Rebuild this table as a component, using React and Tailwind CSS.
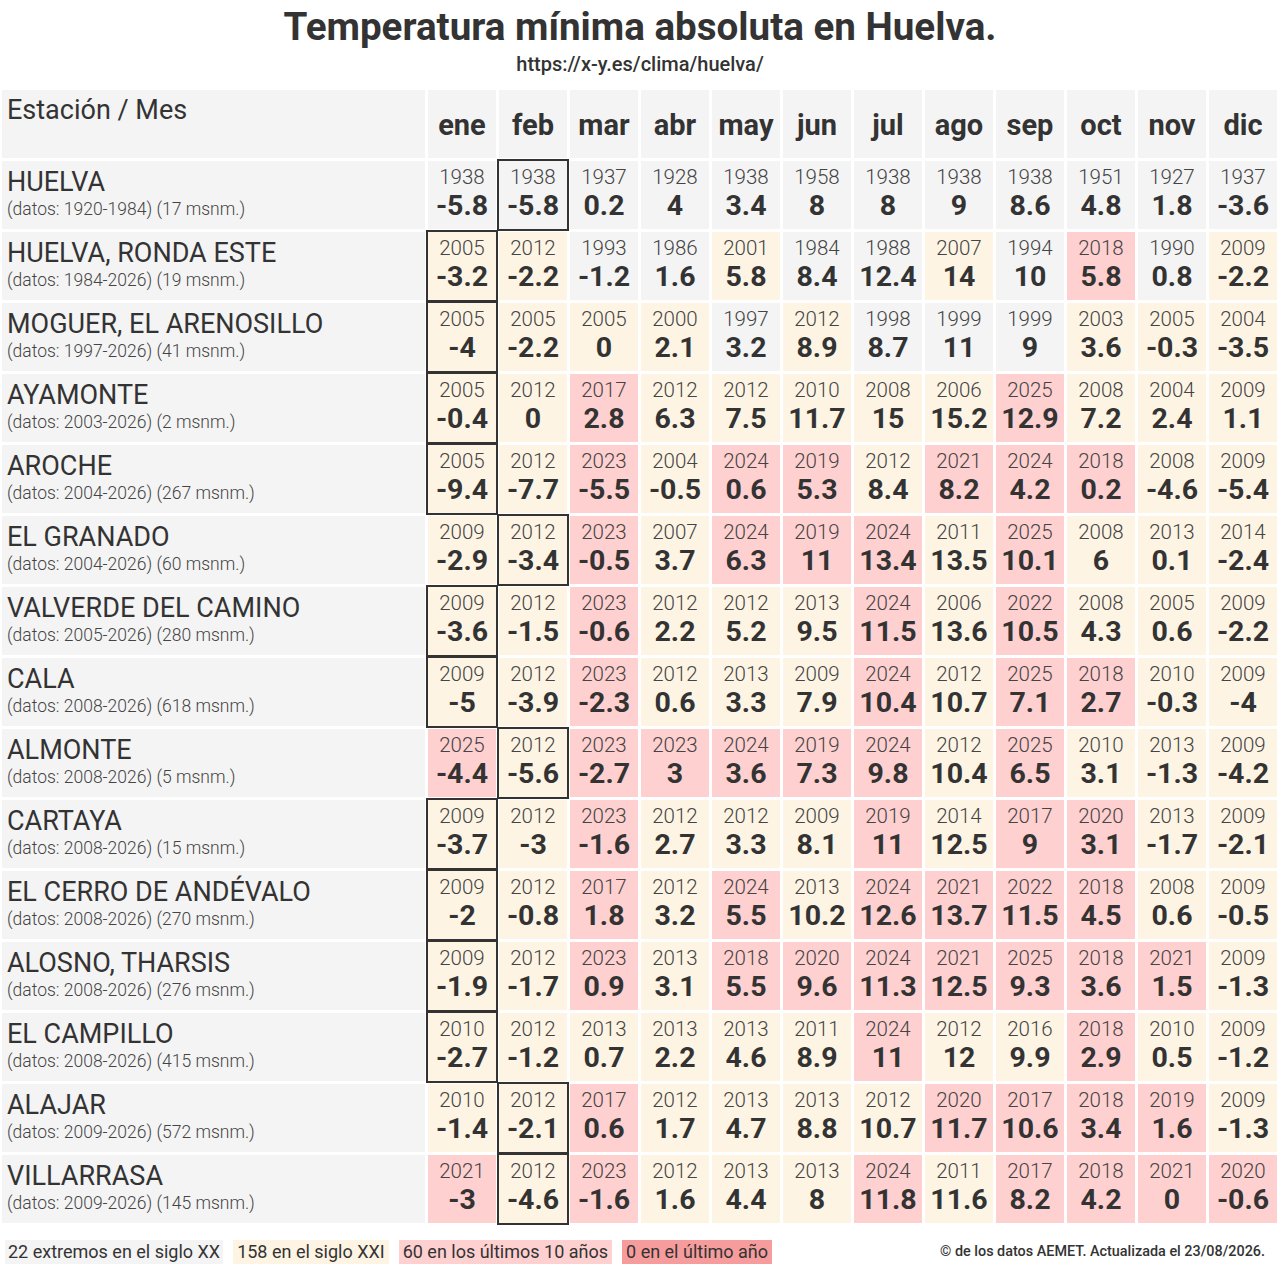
import React from "react";

const MONTHS = ["ene","feb","mar","abr","may","jun","jul","ago","sep","oct","nov","dic"];

const DATA = [
  ["HUELVA","(datos: 1920-1984) (17 msnm.)",1,[[1938,"-5.8"],[1938,"-5.8"],[1937,"0.2"],[1928,"4"],[1938,"3.4"],[1958,"8"],[1938,"8"],[1938,"9"],[1938,"8.6"],[1951,"4.8"],[1927,"1.8"],[1937,"-3.6"]]],
  ["HUELVA, RONDA ESTE","(datos: 1984-2026) (19 msnm.)",0,[[2005,"-3.2"],[2012,"-2.2"],[1993,"-1.2"],[1986,"1.6"],[2001,"5.8"],[1984,"8.4"],[1988,"12.4"],[2007,"14"],[1994,"10"],[2018,"5.8"],[1990,"0.8"],[2009,"-2.2"]]],
  ["MOGUER, EL ARENOSILLO","(datos: 1997-2026) (41 msnm.)",0,[[2005,"-4"],[2005,"-2.2"],[2005,"0"],[2000,"2.1"],[1997,"3.2"],[2012,"8.9"],[1998,"8.7"],[1999,"11"],[1999,"9"],[2003,"3.6"],[2005,"-0.3"],[2004,"-3.5"]]],
  ["AYAMONTE","(datos: 2003-2026) (2 msnm.)",0,[[2005,"-0.4"],[2012,"0"],[2017,"2.8"],[2012,"6.3"],[2012,"7.5"],[2010,"11.7"],[2008,"15"],[2006,"15.2"],[2025,"12.9"],[2008,"7.2"],[2004,"2.4"],[2009,"1.1"]]],
  ["AROCHE","(datos: 2004-2026) (267 msnm.)",0,[[2005,"-9.4"],[2012,"-7.7"],[2023,"-5.5"],[2004,"-0.5"],[2024,"0.6"],[2019,"5.3"],[2012,"8.4"],[2021,"8.2"],[2024,"4.2"],[2018,"0.2"],[2008,"-4.6"],[2009,"-5.4"]]],
  ["EL GRANADO","(datos: 2004-2026) (60 msnm.)",1,[[2009,"-2.9"],[2012,"-3.4"],[2023,"-0.5"],[2007,"3.7"],[2024,"6.3"],[2019,"11"],[2024,"13.4"],[2011,"13.5"],[2025,"10.1"],[2008,"6"],[2013,"0.1"],[2014,"-2.4"]]],
  ["VALVERDE DEL CAMINO","(datos: 2005-2026) (280 msnm.)",0,[[2009,"-3.6"],[2012,"-1.5"],[2023,"-0.6"],[2012,"2.2"],[2012,"5.2"],[2013,"9.5"],[2024,"11.5"],[2006,"13.6"],[2022,"10.5"],[2008,"4.3"],[2005,"0.6"],[2009,"-2.2"]]],
  ["CALA","(datos: 2008-2026) (618 msnm.)",0,[[2009,"-5"],[2012,"-3.9"],[2023,"-2.3"],[2012,"0.6"],[2013,"3.3"],[2009,"7.9"],[2024,"10.4"],[2012,"10.7"],[2025,"7.1"],[2018,"2.7"],[2010,"-0.3"],[2009,"-4"]]],
  ["ALMONTE","(datos: 2008-2026) (5 msnm.)",1,[[2025,"-4.4"],[2012,"-5.6"],[2023,"-2.7"],[2023,"3"],[2024,"3.6"],[2019,"7.3"],[2024,"9.8"],[2012,"10.4"],[2025,"6.5"],[2010,"3.1"],[2013,"-1.3"],[2009,"-4.2"]]],
  ["CARTAYA","(datos: 2008-2026) (15 msnm.)",0,[[2009,"-3.7"],[2012,"-3"],[2023,"-1.6"],[2012,"2.7"],[2012,"3.3"],[2009,"8.1"],[2019,"11"],[2014,"12.5"],[2017,"9"],[2020,"3.1"],[2013,"-1.7"],[2009,"-2.1"]]],
  ["EL CERRO DE ANDÉVALO","(datos: 2008-2026) (270 msnm.)",0,[[2009,"-2"],[2012,"-0.8"],[2017,"1.8"],[2012,"3.2"],[2024,"5.5"],[2013,"10.2"],[2024,"12.6"],[2021,"13.7"],[2022,"11.5"],[2018,"4.5"],[2008,"0.6"],[2009,"-0.5"]]],
  ["ALOSNO, THARSIS","(datos: 2008-2026) (276 msnm.)",0,[[2009,"-1.9"],[2012,"-1.7"],[2023,"0.9"],[2013,"3.1"],[2018,"5.5"],[2020,"9.6"],[2024,"11.3"],[2021,"12.5"],[2025,"9.3"],[2018,"3.6"],[2021,"1.5"],[2009,"-1.3"]]],
  ["EL CAMPILLO","(datos: 2008-2026) (415 msnm.)",0,[[2010,"-2.7"],[2012,"-1.2"],[2013,"0.7"],[2013,"2.2"],[2013,"4.6"],[2011,"8.9"],[2024,"11"],[2012,"12"],[2016,"9.9"],[2018,"2.9"],[2010,"0.5"],[2009,"-1.2"]]],
  ["ALAJAR","(datos: 2009-2026) (572 msnm.)",1,[[2010,"-1.4"],[2012,"-2.1"],[2017,"0.6"],[2012,"1.7"],[2013,"4.7"],[2013,"8.8"],[2012,"10.7"],[2020,"11.7"],[2017,"10.6"],[2018,"3.4"],[2019,"1.6"],[2009,"-1.3"]]],
  ["VILLARRASA","(datos: 2009-2026) (145 msnm.)",1,[[2021,"-3"],[2012,"-4.6"],[2023,"-1.6"],[2012,"1.6"],[2013,"4.4"],[2013,"8"],[2024,"11.8"],[2011,"11.6"],[2017,"8.2"],[2018,"4.2"],[2021,"0"],[2020,"-0.6"]]],
];

function bgFor(year) {
  if (year >= 2026) return "bg-[#f79c9c]";
  if (year >= 2017) return "bg-[#ffd0d0]";
  if (year >= 2000) return "bg-[#fdf4e4]";
  return "bg-[#f4f4f4]";
}

export default function App() {
  return (
    <div className="w-[1280px] bg-white text-[#333] font-['Roboto',sans-serif]">
      <div className="flex flex-col items-center pt-[4px] h-[90px]">
        <h1 className="text-[38.6px] leading-[46px] font-bold">Temperatura mínima absoluta en Huelva.</h1>
        <div className="text-[20px] leading-[24px] font-medium mt-[2px]">https://x-y.es/clima/huelva/</div>
      </div>
      <div className="ml-[2px] grid grid-cols-[423px_repeat(12,68px)] auto-rows-[68px] gap-[3px]">
        <div className="bg-[#f4f4f4] pl-[5px] pt-[5px] text-[27px] leading-[30px]">Estación / Mes</div>
        {MONTHS.map((m) => (
          <div key={m} className="bg-[#f4f4f4] flex items-end justify-center pb-[16px] text-[29px] leading-[34px] font-bold">{m}</div>
        ))}
        {DATA.map(([name, sub, boxIdx, cells]) => (
          <React.Fragment key={name}>
            <div className="bg-[#f4f4f4] pl-[5px] pt-[6px] flex flex-col">
              <div className="text-[27px] leading-[30px]">{name}</div>
              <div className="text-[17.5px] leading-[20px] mt-[2px] font-light text-[#444]">{sub}</div>
            </div>
            {cells.map(([y, v], i) => (
              <div
                key={i}
                className={`${bgFor(y)} flex flex-col items-center pt-[5px] ${i === boxIdx ? "outline-2 outline-solid outline-[#333]" : ""}`}
              >
                <div className="text-[20.5px] leading-[22px] font-light text-[#444]">{y}</div>
                <div className="text-[28.5px] leading-[30px] mt-[3px] font-bold">{v}</div>
              </div>
            ))}
          </React.Fragment>
        ))}
      </div>
      <div className="flex items-center h-[58px] pl-[5px] pr-[15px]">
        <span className="bg-[#f4f4f4] px-[3px] text-[18px] leading-[24px]">22 extremos en el siglo XX</span>
        <span className="bg-[#fdf4e4] px-[4px] ml-[10px] text-[18px] leading-[24px]">158 en el siglo XXI</span>
        <span className="bg-[#ffd0d0] px-[4px] ml-[10px] text-[18px] leading-[24px]">60 en los últimos 10 años</span>
        <span className="bg-[#f79c9c] px-[4px] ml-[10px] text-[18px] leading-[24px]">0 en el último año</span>
        <span className="ml-auto text-[14.4px] font-medium">© de los datos AEMET. Actualizada el 23/08/2026.</span>
      </div>
    </div>
  );
}
